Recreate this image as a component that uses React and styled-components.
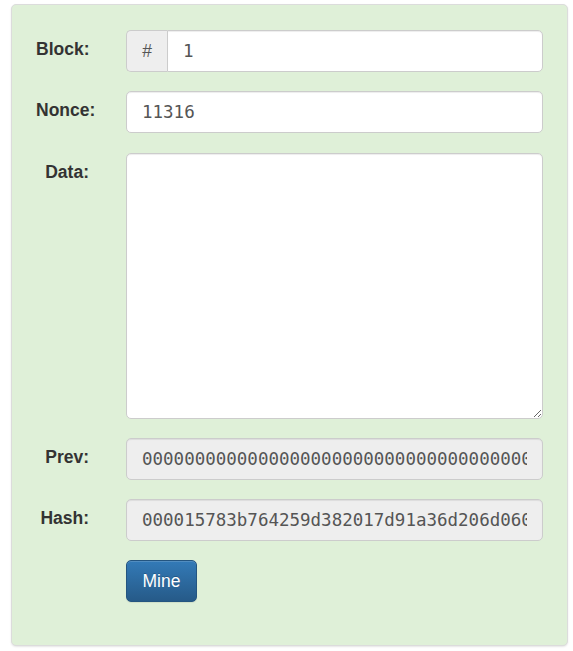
import styled, {createGlobalStyle} from "styled-components";

const GlobalStyle = createGlobalStyle`
    html, body {
        margin: 0;
        padding: 0;
        background: #fff;
    }
    body {
        font-family: "Liberation Sans", Arial, sans-serif;
        font-size: 17.5px;
        line-height: 1.42857;
        color: #333;
    }
`;

const Page = styled.div`
    padding: 4px 5px 4px 11px;
    width: 573px;
    box-sizing: border-box;
`;

const Well = styled.form`
    box-sizing: border-box;
    width: 557px;
    background-color: #dff0d8;
    border: 1px solid #dcdcdc;
    border-radius: 5px;
    box-shadow: 0 1px 2px rgba(0, 0, 0, 0.1);
    padding: 25px 24px 43px 24px;
    display: flex;
    flex-direction: column;
    gap: 19.25px;
`;

const Row = styled.div`
    display: grid;
    grid-template-columns: 53px 417px;
    column-gap: 37px;
    align-items: start;
`;

const Label = styled.label`
    text-align: right;
    white-space: nowrap;
    font-weight: bold;
    color: #333;
    padding-top: 7px;
    line-height: 25px;
    direction: ${(props) => (props.$overflow ? "ltr" : "rtl")};
    unicode-bidi: plaintext;
`;

const fieldBase = `
    box-sizing: border-box;
    width: 100%;
    height: 42px;
    padding: 8px 15px;
    font-family: "DejaVu Sans Mono", "Liberation Mono", monospace;
    font-size: 17.5px;
    color: #555;
    border: 1px solid #ccc;
    border-radius: 5px;
    box-shadow: inset 0 1px 1px rgba(0, 0, 0, 0.075);
    outline: none;
`;

const Input = styled.input`
    ${fieldBase}
    background-color: ${(props) => (props.readOnly ? "#eee" : "#fff")};
`;

const TextArea = styled.textarea`
    ${fieldBase}
    height: 266px;
    background-color: #fff;
    resize: vertical;
    display: block;
`;

const Group = styled.div`
    display: flex;
    width: 100%;
`;

const Addon = styled.span`
    box-sizing: border-box;
    width: 41px;
    height: 42px;
    display: flex;
    align-items: center;
    justify-content: center;
    background-color: #eee;
    color: #555;
    border: 1px solid #ccc;
    border-right: 0;
    border-radius: 5px 0 0 5px;
    font-family: "Liberation Sans", Arial, sans-serif;
    font-size: 17.5px;
`;

const GroupInput = styled(Input)`
    flex: 1;
    border-radius: 0 5px 5px 0;
`;

const Button = styled.button`
    box-sizing: border-box;
    width: 71px;
    height: 42px;
    padding: 0;
    font-family: "Liberation Sans", Arial, sans-serif;
    font-size: 17.5px;
    color: #fff;
    background-image: linear-gradient(to bottom, #337ab7 0, #265a88 100%);
    border: 1px solid #245580;
    border-radius: 5px;
    box-shadow: inset 0 1px 0 rgba(255, 255, 255, 0.15), 0 1px 1px rgba(0, 0, 0, 0.075);
    text-shadow: 0 -1px 0 rgba(0, 0, 0, 0.2);
    cursor: pointer;
`;

const prev = "0".repeat(64);
const hash = "000015783b764259d382017d91a36d206d0600e2cbb3567748f46a33fe9297cf";

export default function App() {
    return (
        <Page>
            <GlobalStyle/>
            <Well onSubmit={(e) => e.preventDefault()}>
                <Row>
                    <Label $overflow>Block:</Label>
                    <Group>
                        <Addon>#</Addon>
                        <GroupInput defaultValue="1"/>
                    </Group>
                </Row>
                <Row>
                    <Label $overflow>Nonce:</Label>
                    <Input defaultValue="11316"/>
                </Row>
                <Row>
                    <Label>Data:</Label>
                    <TextArea defaultValue=""/>
                </Row>
                <Row>
                    <Label>Prev:</Label>
                    <Input readOnly value={prev}/>
                </Row>
                <Row>
                    <Label>Hash:</Label>
                    <Input readOnly value={hash}/>
                </Row>
                <Row>
                    <span/>
                    <div>
                        <Button type="submit">Mine</Button>
                    </div>
                </Row>
            </Well>
        </Page>
    );
}
